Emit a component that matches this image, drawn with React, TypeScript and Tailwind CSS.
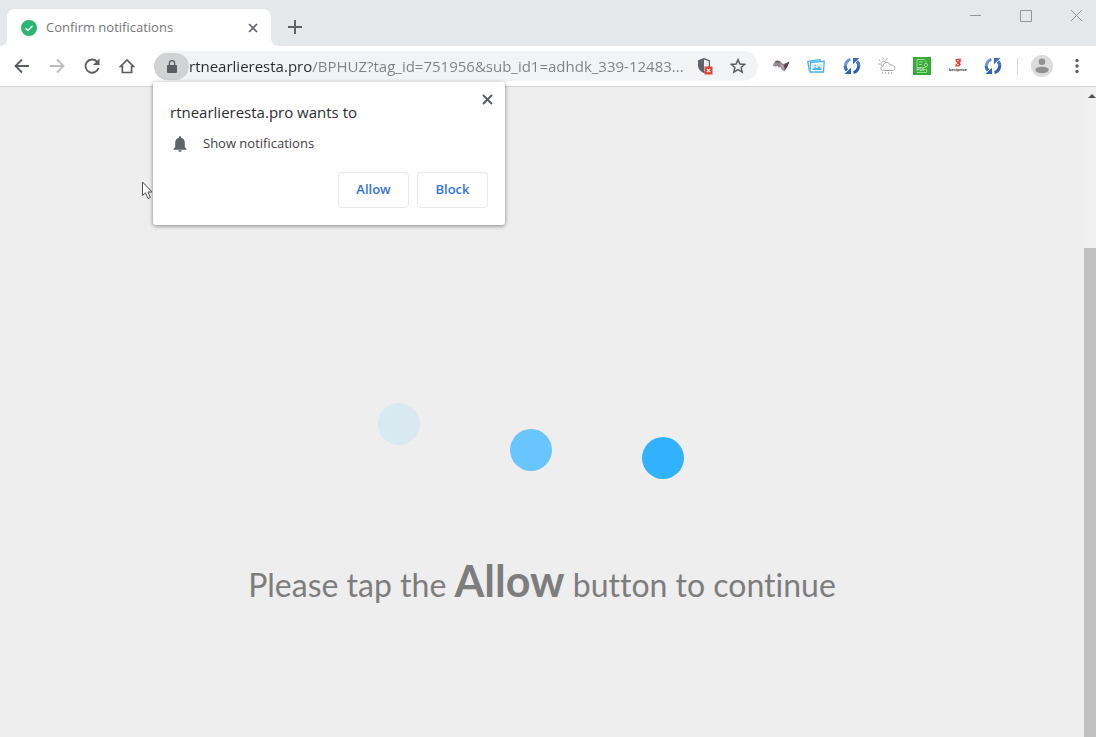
import React, { useState } from 'react';

const uiFont = 'font-["Open_Sans","Noto_Sans",sans-serif]';
const iconButton = 'flex h-8 w-[35px] items-center justify-center text-[#5a5d61]';

const SyncIcon: React.FC = () => (
  <svg viewBox="0 0 18 18" className="h-[18px] w-[18px]">
    <path d="M7.500 2.400A6.900 6.900 0 0 0 4 13.500" fill="none" stroke="#6f98d0" strokeWidth="3" />
    <path d="M2 9A6.900 6.900 0 0 0 4 13.500" fill="none" stroke="#3d6fbb" strokeWidth="3" />
    <path d="M1.500 17H8V10.800Z" fill="#2f62b5" />
    <path d="M10.500 15.600A6.900 6.900 0 0 0 14 4.500" fill="none" stroke="#2f62b5" strokeWidth="3" />
    <path d="M16 9A6.900 6.900 0 0 0 14 4.500" fill="none" stroke="#4a79c0" strokeWidth="3" />
    <path d="M16.500 1H10V7.200Z" fill="#3c6cb8" />
  </svg>
);

const extensions: { name: string; icon: React.ReactNode }[] = [
  {
    name: 'Wings',
    icon: (
      <svg viewBox="0 0 18 18" className="h-[18px] w-[18px]">
        <path d="M0.500 9.500L2.500 5L5 3.500L8.500 4.500L11 7L17.500 4.500L15.500 9L12.500 14.500L9.500 12L8.500 10L6.500 10.500L5.500 9L3.500 9.800L2.500 8.800Z" fill="#938990" />
        <path d="M2.500 5L5 3.500L8.500 4.500L7 6Z" fill="#6a646b" />
        <path d="M12 8L17.500 4.500L15 10L12.800 13Z" fill="#5c3b50" />
        <path d="M8 7L11 8.500L12.500 12.500L9.500 10.500Z" fill="#bda9b4" />
      </svg>
    ),
  },
  {
    name: 'Images',
    icon: (
      <svg viewBox="0 0 18 18" className="h-[18px] w-[18px]" fill="none" stroke="#4ab4ee">
        <path d="M2.200 13.500L0.800 4.500L13 2.600L13.300 4" strokeWidth="1.300" />
        <path d="M3.500 5.500L17.200 4.300L16.500 15L3 15Z" fill="#fff" strokeWidth="1.300" />
        <path d="M5.500 7.300L15.200 6.600L14.700 13H5.200Z" fill="#d3effd" stroke="none" />
        <path d="M5.200 13L8 10L10 11.500L12 9.300L14.700 13Z" fill="#42aeea" stroke="none" />
        <circle cx="8" cy="8.500" r="0.800" fill="#42aeea" stroke="none" />
      </svg>
    ),
  },
  { name: 'Sync', icon: <SyncIcon /> },
  {
    name: 'Weather',
    icon: (
      <svg viewBox="0 0 18 18" className="h-[18px] w-[18px]" fill="none" stroke="#a8a8a8" strokeLinecap="round">
        <path d="M5 13.500C2 13.500 2 9.500 5 9.300C5 5 11 4 12.300 8C17.800 7.500 18.500 13.500 14.500 13.500Z" />
        <path d="M3.300 8.500C1.800 5.500 5 3 7.500 5M5 0.800V2.500M0.900 2.700L2 3.800M0.500 7H1.500M9 1.500L8 3" />
        <path d="M4.500 15.500V16.500M7.500 15.500V16.500M10.500 15.500V16.500M13.500 15.500V16.500" />
      </svg>
    ),
  },
  {
    name: 'PDF',
    icon: (
      <svg viewBox="0 0 18 18" className="h-[18px] w-[18px]">
        <path d="M0 0H18V18H0Z" fill="#39ab39" />
        <path d="M4 9.500V2.500H11L13 4.500V5.500M6 5H10M6 7.500H9M4 15.500H13.500V11.500" fill="none" stroke="#9adb98" />
        <circle cx="13" cy="8" r="1.700" fill="none" stroke="#9adb98" />
        <text x="3.500" y="14" fontSize="4.500" fontWeight="700" fontFamily="Liberation Sans" fill="#d5f3d3">PDF</text>
      </svg>
    ),
  },
  {
    name: 'Bestprice',
    icon: (
      <svg viewBox="0 0 18 18" className="h-[18px] w-[18px]">
        <path d="M6.500 2L11.500 1.500L12 4.500L10.800 5.800L12 7.300L10.500 9.500H6L6.500 7.500L8.500 6L6.800 4.800Z" fill="#e5483a" />
        <path d="M8 3.200H10L9.500 4.300H8ZM8.300 7H10.200L9.300 8.300H7.500Z" fill="#ffd6cf" />
        <text x="9" y="14" textAnchor="middle" fontSize="4" fontWeight="700" fontFamily="Liberation Sans" fill="#292525">bestprice</text>
      </svg>
    ),
  },
  { name: 'Sync copy', icon: <SyncIcon /> },
];

const TabStrip: React.FC = () => (
  <div className="flex h-[46px] items-start bg-[#e5e8eb]">
    <div className="relative ml-[7px] mt-[9px] flex h-[37px] w-[264px] items-center rounded-t-lg bg-white pl-[14px] pr-3">
      <svg viewBox="0 0 16 16" className="h-4 w-4">
        <circle cx="8" cy="8" r="8" fill="#2bb673" />
        <path d="M4.500 8.200L7 10.500L11.500 5.800" fill="none" stroke="#fff" strokeWidth="1.300" />
      </svg>
      <span className="ml-[9px] flex-1 text-[13px] text-[#75777b]">Confirm notifications</span>
      <button aria-label="Close tab" className="flex h-4 w-3 items-center justify-center">
        <svg viewBox="0 0 10 10" className="h-[10px] w-[10px]" stroke="#5f6368" strokeWidth="1.600">
          <path d="M1 1L9 9M9 1L1 9" />
        </svg>
      </button>
      <svg viewBox="0 0 8 8" className="absolute -left-[7px] bottom-0 h-2 w-2" fill="#fff">
        <path d="M8 0V8H0A8 8 0 0 0 8 0Z" />
      </svg>
      <svg viewBox="0 0 8 8" className="absolute -right-2 bottom-0 h-2 w-2" fill="#fff">
        <path d="M0 0V8H8A8 8 0 0 1 0 0Z" />
      </svg>
    </div>
    <button aria-label="New tab" className="ml-4 mt-5 flex h-[14px] w-4 items-center justify-center">
      <svg viewBox="0 0 14 14" className="h-[14px] w-[14px]" stroke="#5f6368" strokeWidth="2">
        <path d="M7 0V14M0 7H14" />
      </svg>
    </button>
    <div className="ml-auto mr-[13px] mt-[9px] flex gap-[38px]">
      <button aria-label="Minimize">
        <svg viewBox="0 0 13 13" className="h-[13px] w-[13px]" stroke="#929598"><path d="M2 6.500H13" /></svg>
      </button>
      <button aria-label="Maximize">
        <svg viewBox="0 0 13 13" className="h-[13px] w-[13px]" fill="none" stroke="#929598"><path d="M1.500 1.500H12.500V12.500H1.500Z" /></svg>
      </button>
      <button aria-label="Close window">
        <svg viewBox="0 0 13 13" className="h-[13px] w-[13px]" stroke="#929598"><path d="M1 1L12 12M12 1L1 12" /></svg>
      </button>
    </div>
  </div>
);

const Toolbar: React.FC = () => {
  const [url, setUrl] = useState('rtnearlieresta.pro/BPHUZ?tag_id=751956&sub_id1=adhdk_339-12483...');

  return (
    <div className="flex h-[41px] items-center border-b border-[#d2d3d4] bg-white pl-1 pr-3">
      <button aria-label="Back" className={iconButton}>
        <svg viewBox="0 0 16 16" className="h-4 w-4" fill="none" stroke="currentColor" strokeWidth="1.800">
          <path d="M15 8H2M8 1.500L1.500 8L8 14.500" />
        </svg>
      </button>
      <button aria-label="Forward" className="flex h-8 w-[35px] items-center justify-center text-[#bcbdbf]">
        <svg viewBox="0 0 16 16" className="h-4 w-4" fill="none" stroke="currentColor" strokeWidth="1.800">
          <path d="M1 8H14M8 1.500L14.500 8L8 14.500" />
        </svg>
      </button>
      <button aria-label="Reload" className={iconButton}>
        <svg viewBox="0 0 16 16" className="h-4 w-4" fill="none" stroke="currentColor" strokeWidth="1.800">
          <path d="M14.500 10A6.600 6.600 0 1 1 13 3.600L14 5" />
          <path d="M15.500 0.500V7H9Z" fill="currentColor" stroke="none" />
        </svg>
      </button>
      <button aria-label="Home" className={iconButton}>
        <svg viewBox="0 0 16 16" className="h-4 w-4" fill="none" stroke="currentColor" strokeWidth="1.700">
          <path d="M1.500 8.500L8 2L14.500 8.500H12.600V14.500H3.400V8.500Z" />
        </svg>
      </button>

      <div className="ml-2.5 flex h-[30px] min-w-0 flex-1 items-center rounded-full bg-[#f1f3f4]">
        <button aria-label="View site information" className="flex h-[27px] w-[35px] shrink-0 items-center justify-center rounded-full bg-[#d0d2d3]">
          <svg viewBox="0 0 10 13" className="h-[13px] w-[10px]" fill="#5a5d61">
            <path d="M1 5H9Q10 5 10 6V12Q10 13 9 13H1Q0 13 0 12V6Q0 5 1 5Z" />
            <path d="M2.400 5.500V3.300A2.600 2.600 0 0 1 7.600 3.300V5.500" fill="none" stroke="#5a5d61" strokeWidth="1.300" />
          </svg>
        </button>
        {/* host part is darker than the path */}
        <input
          aria-label="Address bar"
          value={url}
          onChange={e => setUrl(e.target.value)}
          className="h-7 min-w-0 flex-1 bg-linear-[90deg,#27292c_123px,#7d8084_123px] bg-clip-text text-[15px] text-transparent outline-none"
        />
        <button aria-label="Notifications blocked" className="mr-[17px] shrink-0">
          <svg viewBox="0 0 16 18" className="h-[18px] w-4">
            <path d="M7 1L13 3.300V8C13 12 10.500 14.500 7 16C3.500 14.500 1 12 1 8V3.300Z" fill="#5f6368" />
            <path d="M7 2.500L11.800 4.200V8C11.800 11.500 9.500 13.500 7 14.700Z" fill="#eceeef" />
            <path d="M7.500 9.500H15.500V17.500H7.500Z" fill="#dc4437" />
            <path d="M9.800 11.800L13.200 15.200M13.200 11.800L9.800 15.200" stroke="#fff" strokeWidth="1.200" />
          </svg>
        </button>
        <button aria-label="Bookmark this page" className="mr-3 shrink-0">
          <svg viewBox="0 0 16 16" className="h-4 w-4" fill="none" stroke="#5a5d61" strokeWidth="1.500">
            <path d="M8 1.600L9.900 6L14.700 6.400L11.100 9.500L12.200 14.200L8 11.700L3.800 14.200L4.900 9.500L1.300 6.400L6.100 6Z" />
          </svg>
        </button>
      </div>

      <div className="ml-[14px] flex w-[230px] items-center justify-between">
        {extensions.map(ext => (
          <button key={ext.name} aria-label={ext.name}>
            {ext.icon}
          </button>
        ))}
      </div>

      <div className="ml-[15px] h-[17px] w-px bg-[#d5d7d9]" />
      <button aria-label="Profile" className="ml-[13px]">
        <svg viewBox="0 0 22 22" className="h-[22px] w-[22px]">
          <circle cx="11" cy="11" r="11" fill="#dcdcdc" />
          <circle cx="11" cy="6.800" r="3.300" fill="#8f9092" />
          <path d="M4.300 15C4.300 10.800 17.700 10.800 17.700 15C16.500 19.300 5.500 19.300 4.300 15Z" fill="#8f9092" />
        </svg>
      </button>
      <button aria-label="Menu" className="ml-[17px] flex w-[14px] justify-center">
        <svg viewBox="0 0 4 16" className="h-4 w-1" fill="#5a5d61">
          <circle cx="2" cy="2.500" r="1.700" />
          <circle cx="2" cy="8" r="1.700" />
          <circle cx="2" cy="13.500" r="1.700" />
        </svg>
      </button>
    </div>
  );
};

const PermissionPopup: React.FC = () => (
  <div role="dialog" aria-label="Permission request" className="absolute left-[153px] top-[82px] w-[352px] rounded-[3px] bg-white px-[17px] pb-[17px] pt-[18px] shadow-[0_1px_4px_rgba(0,0,0,0.45)]">
    <button aria-label="Close" className="absolute right-3 top-3">
      <svg viewBox="0 0 11 11" className="h-[11px] w-[11px]" stroke="#55585c" strokeWidth="1.800">
        <path d="M1 1L10 10M10 1L1 10" />
      </svg>
    </button>
    <h2 className="text-[15px] leading-6 text-[#2b2e32]">rtnearlieresta.pro wants to</h2>
    <div className="mt-[10px] flex h-5 items-center pl-[3px]">
      <svg viewBox="0 0 14 16" className="h-4 w-[14px]" fill="#5f6368">
        <path d="M7 0Q8.200 0 8.200 1.700Q11.800 2.700 11.800 7V11L13.500 13V13.700H0.500V13L2.200 11V7Q2.200 2.700 5.800 1.700Q5.800 0 7 0ZM5.300 14.300H8.700Q8.700 16 7 16Q5.300 16 5.300 14.300Z" />
      </svg>
      <span className="ml-4 text-[13px] text-[#3f4246]">Show notifications</span>
    </div>
    <div className="mt-[18px] flex justify-end gap-2">
      <button className="h-9 w-[71px] rounded border border-[#e8eaed] text-[13px] font-semibold text-[#3574dc]">Allow</button>
      <button className="h-9 w-[71px] rounded border border-[#e8eaed] text-[13px] font-semibold text-[#3574dc]">Block</button>
    </div>
  </div>
);

const App: React.FC = () => {
  return (
    <div className={`relative flex min-h-screen flex-col overflow-hidden bg-[#eeeeee] ${uiFont}`}>
      <TabStrip />
      <Toolbar />
      <div className="flex flex-1">
        <main className="flex flex-1 flex-col items-center pt-[315px]">
          <svg viewBox="0 0 308 78" className="mr-[22px] h-[78px] w-[308px]" aria-label="Loading">
            <circle cx="22" cy="22" r="21" fill="#d9e9f1" />
            <circle cx="154" cy="48" r="21" fill="#69c5ff" />
            <circle cx="286" cy="56" r="21" fill="#32b1ff" />
          </svg>
          <p className='mt-[71px] whitespace-nowrap font-["Lato","Open_Sans",sans-serif] text-[32px] leading-[60px] text-[#7d7d7d] [font-variant-ligatures:none]'>
            Please tap the <strong className="text-[43px] font-bold">Allow</strong> button to continue
          </p>
        </main>
        <div className="flex w-3 flex-col bg-[#f0f0f0]">
          <svg viewBox="0 0 12 16" className="h-4 w-3" fill="#505050">
            <path d="M4 11L8 7L12 11Z" />
          </svg>
          <div className="mt-[145px] flex-1 bg-[#c1c1c1]" />
        </div>
      </div>

      <PermissionPopup />
      <svg viewBox="0 0 12 19" className="absolute left-[141px] top-[181px] h-[19px] w-3">
        <path d="M1.500 1V14.500L4.500 11.800L7 17.500L9.300 16.500L7 11H11Z" fill="#fff" stroke="#4d4d4d" />
      </svg>
    </div>
  );
};

export default App;
